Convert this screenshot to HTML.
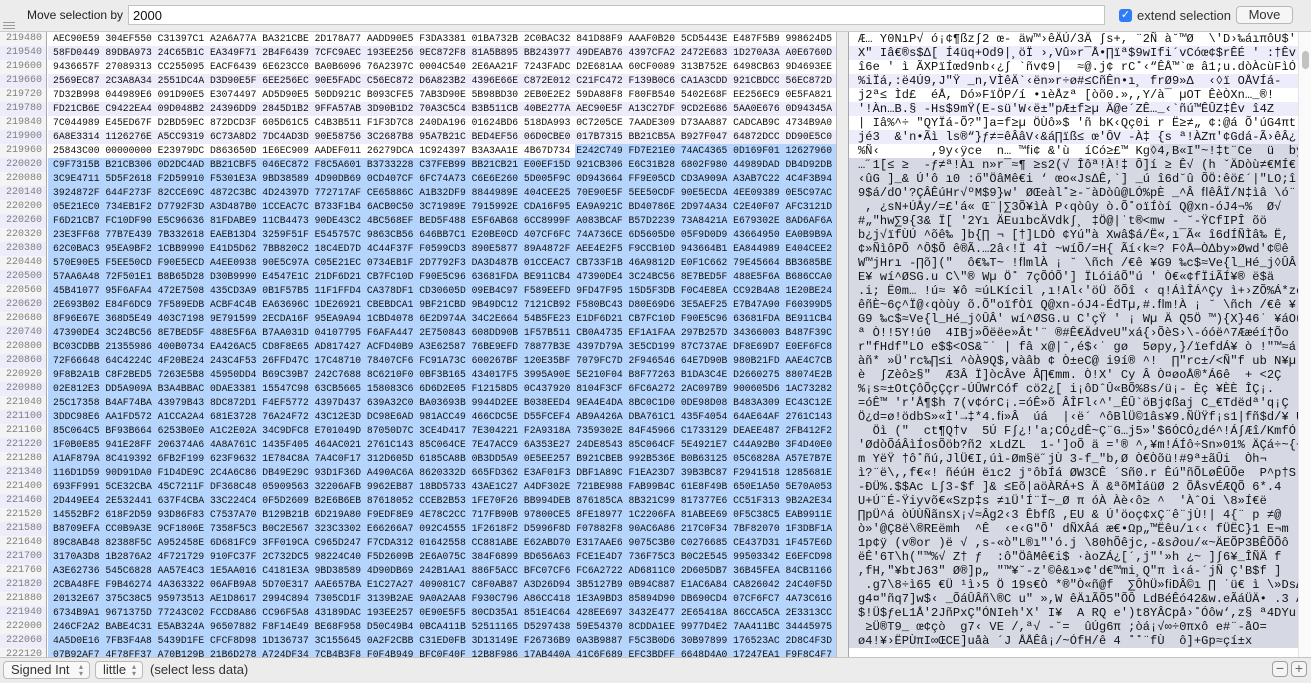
<!DOCTYPE html>
<html><head><meta charset="utf-8">
<style>
*{margin:0;padding:0;box-sizing:border-box}
html,body{width:1311px;height:683px;overflow:hidden;background:#fff;font-family:"Liberation Sans",sans-serif}
#top{position:absolute;left:0;top:0;width:1311px;height:32px;background:#ececec;border-bottom:1px solid #c9c9c9}
#top .lbl{position:absolute;left:27px;top:8px;font-size:12px;color:#222}
#top .inp{position:absolute;left:128px;top:5px;width:977px;height:20px;background:#fff;border:1px solid #c3c3c3;font-size:13px;padding:2px 4px;color:#111}
#top .cb{position:absolute;left:1119px;top:9px;width:13px;height:13px;background:#2f7df6;border-radius:3px;color:#fff;font-size:11px;line-height:13px;text-align:center}
#top .ext{position:absolute;left:1137px;top:8px;font-size:13px;color:#333}
#top .btn{position:absolute;left:1236px;top:6px;width:57px;height:18px;border:1px solid #b9b9b9;border-radius:4px;background:#f6f6f6;font-size:13px;text-align:center;line-height:16px;color:#333}
.ham{position:absolute;left:3px;width:12px;height:1px;background:#9a9a9a}
#off{position:absolute;left:0;top:32px;width:47px;height:625px;background:#f4f4f4;border-right:1px solid #a8a8a8;overflow:hidden}
#hex{position:absolute;left:48px;top:32px;width:788px;height:625px;overflow:hidden}
#div{position:absolute;left:836px;top:32px;width:13px;height:625px;background:#ececec;border-left:1px solid #bdbdbd;border-right:1px solid #a8a8a8}
#asc{position:absolute;left:849px;top:32px;width:449px;height:625px;overflow:hidden}
#sb{position:absolute;left:1298px;top:32px;width:13px;height:625px;background:#fafafa;border-left:1px solid #e4e4e4}
#sb .th{position:absolute;left:3px;top:19px;width:7px;height:18px;background:#c2c2c2;border-radius:4px}
.r{height:14px;line-height:14px;white-space:pre;position:relative;overflow:hidden}
#off .r{font-family:"Liberation Mono",monospace;font-size:10px;color:#808080;text-align:right;padding-right:4px}
#hex .r{font-family:"Liberation Mono",monospace;font-size:9.7px;color:#111;padding-left:5px}
#asc .r{font-family:"Liberation Mono","DejaVu Sans Mono",monospace;font-size:12px;letter-spacing:0.1px;color:#111;padding-left:9px}
.o{background:#ececfa}
#hex .s{background:#b5d5fd}
#asc .s{background:#d6d8e4}
.ps{position:absolute;left:527px;top:0;width:261px;height:14px;background:#b5d5fd}
.pa{position:absolute;left:301px;top:0;width:148px;height:14px;background:#d6d8e4}
.r span{position:relative}
#bot{position:absolute;left:0;top:657px;width:1311px;height:26px;background:#ececec;border-top:1px solid #c4c4c4}
.pop{position:absolute;top:3px;height:18px;border:1px solid #b9b9b9;border-radius:4px;background:#f8f8f8;font-size:13px;line-height:16px;padding-left:7px;color:#333}
.pop i{position:absolute;right:6px;font-style:normal;font-size:8px;color:#888;line-height:7px;top:1px}
.pm{position:absolute;top:3px;width:16px;height:16px;border:1px solid #9e9e9e;border-radius:4px;background:#f4f4f4;font-size:14px;line-height:13px;text-align:center;color:#666}
</style></head><body>
<div id="top">
<div class="lbl">Move selection by</div>
<div class="inp">2000</div>
<div class="cb">✓</div>
<div class="ext">extend selection</div>
<div class="btn">Move</div>
<div class="ham" style="top:22px"></div><div class="ham" style="top:25px"></div><div class="ham" style="top:28px"></div>
</div>
<div id="off">
<div class="r">219480</div><div class="r o">219540</div><div class="r">219600</div><div class="r o">219660</div><div class="r">219720</div><div class="r o">219780</div><div class="r">219840</div><div class="r o">219900</div><div class="r">219960</div><div class="r o">220020</div><div class="r">220080</div><div class="r o">220140</div><div class="r">220200</div><div class="r o">220260</div><div class="r">220320</div><div class="r o">220380</div><div class="r">220440</div><div class="r o">220500</div><div class="r">220560</div><div class="r o">220620</div><div class="r">220680</div><div class="r o">220740</div><div class="r">220800</div><div class="r o">220860</div><div class="r">220920</div><div class="r o">220980</div><div class="r">221040</div><div class="r o">221100</div><div class="r">221160</div><div class="r o">221220</div><div class="r">221280</div><div class="r o">221340</div><div class="r">221400</div><div class="r o">221460</div><div class="r">221520</div><div class="r o">221580</div><div class="r">221640</div><div class="r o">221700</div><div class="r">221760</div><div class="r o">221820</div><div class="r">221880</div><div class="r o">221940</div><div class="r">222000</div><div class="r o">222060</div><div class="r">222120</div>
</div>
<div id="hex">
<div class="r">AEC90E59 304EF550 C31397C1 A2A6A77A BA321CBE 2D178A77 AADD90E5 F3DA3381 01BA732B 2C0BAC32 841D88F9 AAAF0B20 5CD5443E E487F5B9 998624D5</div>
<div class="r o">58FD0449 89DBA973 24C65B1C EA349F71 2B4F6439 7CFC9AEC 193EE256 9EC872F8 81A5B895 BB243977 49DEAB76 4397CFA2 2472E683 1D270A3A A0E6760D</div>
<div class="r">9436657F 27089313 CC255095 EACF6439 6E623CC0 BA0B6096 76A2397C 0004C540 2E6AA21F 7243FADC D2E681AA 60CF0089 313B752E 6498CB63 9D4693EE</div>
<div class="r o">2569EC87 2C3A8A34 2551DC4A D3D90E5F 6EE256EC 90E5FADC C56EC872 D6A823B2 4396E66E C872E012 C21FC472 F139B0C6 CA1A3CDD 921CBDCC 56EC872D</div>
<div class="r">7D32B998 044989E6 091D90E5 E3074497 AD5D90E5 50DD921C B093CFE5 7AB3D90E 5B98BD30 2EB0E2E2 59DA88F8 F80FB540 5402E68F EE256EC9 0E5FA821</div>
<div class="r o">FD21CB6E C9422EA4 09D048B2 24396DD9 2845D1B2 9FFA57AB 3D90B1D2 70A3C5C4 B3B511CB 40BE277A AEC90E5F A13C27DF 9CD2E686 5AA0E676 0D94345A</div>
<div class="r">7C044989 E45ED67F D2BD59EC 872DCD3F 605D61C5 C4B3B511 F1F3D7C8 240DA196 01624BD6 518DA993 0C7205CE 7AADE309 D73AA887 CADCAB9C 4734B9A0</div>
<div class="r o">6A8E3314 1126276E A5CC9319 6C73A8D2 7DC4AD3D 90E58756 3C2687B8 95A7B21C BED4EF56 06D0CBE0 017B7315 BB21CB5A B927F047 64872DCC DD90E5C0</div>
<div class="r"><div class="ps"></div><span>25843C00 00000000 E23979DC D863650D 1E6EC909 AADEF011 26279DCA 1C924397 B3A3AA1E 4B67D734 E242C749 FD7E21E0 74AC4365 0D169F01 12627960</span></div>
<div class="r s">C9F7315B B21CB306 0D2DC4AD BB21CBF5 046EC872 F8C5A601 B3733228 C37FEB99 BB21CB21 E00EF15D 921CB306 E6C31B28 6802F980 44989DAD DB4D92DB</div>
<div class="r s">3C9E4711 5D5F2618 F2D59910 F5301E3A 9BD38589 4D90DB69 0CD407CF 6FC74A73 C6E6E260 5D005F9C 0D943664 FF9E05CD CD3A909A A3AB7C22 4C4F3B94</div>
<div class="r s">3924872F 644F273F 82CCE69C 4872C3BC 4D24397D 772717AF CE65886C A1B32DF9 8844989E 404CEE25 70E90E5F 5EE50CDF 90E5ECDA 4EE09389 0E5C97AC</div>
<div class="r s">05E21EC0 734EB1F2 D7792F3D A3D487B0 1CCEAC7C B733F1B4 6ACB0C50 3C71989E 7915992E CDA16F95 EA9A921C BD40786E 2D974A34 C2E40F07 AFC3121D</div>
<div class="r s">F6D21CB7 FC10DF90 E5C96636 81FDABE9 11CB4473 90DE43C2 4BC568EF BED5F488 E5F6AB68 6CC8999F A083BCAF B57D2239 73A8421A E679302E 8AD6AF6A</div>
<div class="r s">23E3FF68 77B7E439 7B332618 EAEB13D4 3259F51F E545757C 9863CB56 646BB7C1 E20BE0CD 407CF6FC 74A736CE 6D5605D0 05F9D0D9 43664950 EA0B9B9A</div>
<div class="r s">62C0BAC3 95EA9BF2 1CBB9990 E41D5D62 7BB820C2 18C4ED7D 4C44F37F F0599CD3 890E5877 89A4872F AEE4E2F5 F9CCB10D 943664B1 EA844989 E404CEE2</div>
<div class="r s">570E90E5 F5EE50CD F90E5ECD A4EE0938 90E5C97A C05E21EC 0734EB1F 2D7792F3 DA3D487B 01CCEAC7 CB733F1B 46A9812D E0F1C662 79E45664 BB3685BE</div>
<div class="r s">57AA6A48 72F501E1 B8B65D28 D30B9990 E4547E1C 21DF6D21 CB7FC10D F90E5C96 63681FDA BE911CB4 47390DE4 3C24BC56 8E7BED5F 488E5F6A B686CCA0</div>
<div class="r s">45B41077 95F6AFA4 472E7508 435CD3A9 0B1F57B5 11F1FFD4 CA378DF1 CD30605D 09EB4C97 F589EEFD 9FD47F95 15D5F3DB F0C4E8EA CC92B4A8 1E20BE24</div>
<div class="r s">2E693B02 E84F6DC9 7F589EDB ACBF4C4B EA63696C 1DE26921 CBEBDCA1 9BF21CBD 9B49DC12 7121CB92 F580BC43 D80E69D6 3E5AEF25 E7B47A90 F60399D5</div>
<div class="r s">8F96E67E 368D5E49 403C7198 9E791599 2ECDA16F 95EA9A94 1CBD4078 6E2D974A 34C2E664 54B5FE23 E1DF6D21 CB7FC10D F90E5C96 63681FDA BE911CB4</div>
<div class="r s">47390DE4 3C24BC56 8E7BED5F 488E5F6A B7AA031D 04107795 F6AFA447 2E750843 608DD90B 1F57B511 CB0A4735 EF1A1FAA 297B257D 34366003 B487F39C</div>
<div class="r s">BC03CDBB 21355986 400B0734 EA426AC5 CD8F8E65 AD817427 ACFD40B9 A3E62587 76BE9EFD 78877B3E 4397D79A 3E5CD199 87C737AE DF8E69D7 E0EF6FC8</div>
<div class="r s">72F66648 64C4224C 4F20BE24 243C4F53 26FFD47C 17C48710 78407CF6 FC91A73C 600267BF 120E35BF 7079FC7D 2F946546 64E7D90B 980B21FD AAE4C7CB</div>
<div class="r s">9F8B2A1B C8F2BED5 7263E5B8 45950DD4 B69C39B7 242C7688 8C6210F0 0BF3B165 434017F5 3995A90E 5E210F04 B8F77263 B1DA3C4E D2660275 88074E2B</div>
<div class="r s">02E812E3 DD5A909A B3A4BBAC 0DAE3381 15547C98 63CB5665 158083C6 6D6D2E05 F12158D5 0C437920 8104F3CF 6FC6A272 2AC097B9 900605D6 1AC73282</div>
<div class="r s">25C17358 B4AF74BA 43979B43 8DC872D1 F4EF5772 4397D437 639A32C0 BA03693B 9944D2EE B038EED4 9EA4E4DA 8BC0C1D0 0DE98D08 B483A309 EC43C12E</div>
<div class="r s">3DDC98E6 AA1FD572 A1CCA2A4 681E3728 76A24F72 43C12E3D DC98E6AD 981ACC49 466CDC5E D55FCEF4 AB9A426A DBA761C1 435F4054 64AE64AF 2761C143</div>
<div class="r s">85C064C5 BF93B664 6253B0E0 A1C2E02A 34C9DFC8 E701049D 87050D7C 3CE4D417 7E304221 F2A9318A 7359302E 84F45966 C1733129 DEAEE487 2FB412F2</div>
<div class="r s">1F0B0E85 941E28FF 206374A6 4A8A761C 1435F405 464AC021 2761C143 85C064CE 7E47ACC9 6A353E27 24DE8543 85C064CF 5E4921E7 C44A92B0 3F4D40E0</div>
<div class="r s">A1AF879A 8C419392 6FB2F199 623F9632 1E784C8A 7A4C0F17 312D605D 6185CA8B 0B3DD5A9 0E5EE257 B921CBEB 992B536E B0B63125 05C6828A A57E7B7E</div>
<div class="r s">116D1D59 90D91DA0 F1D4DE9C 2C4A6C86 DB49E29C 93D1F36D A490AC6A 8620332D 665FD362 E3AF01F3 DBF1A89C F1EA23D7 39B3BC87 F2941518 1285681E</div>
<div class="r s">693FF991 5CE32CBA 45C7211F DF368C48 05909563 32206AFB 9962EB87 18BD5733 43AE1C27 A4DF302E 721BE988 FAB99B4C 61E8F49B 650E1A50 5E70A053</div>
<div class="r s">2D449EE4 2E532441 637F4CBA 33C224C4 0F5D2609 B2E6B6EB 87618052 CCEB2B53 1FE70F26 BB994DEB 876185CA 8B321C99 817377E6 CC51F313 9B2A2E34</div>
<div class="r s">14552BF2 618F2D59 93D86F83 C7537A70 B129B21B 6D219A80 F9EDF8E9 4E78C2CC 717FB90B 97800CE5 8FE18977 1C2206FA 81ABEE69 0F5C38C5 EAB9911E</div>
<div class="r s">B8709EFA CC0B9A3E 9CF1806E 7358F5C3 B0C2E567 323C3302 E66266A7 092C4555 1F2618F2 D5996F8D F07882F8 90AC6A86 217C0F34 7BF82070 1F3DBF1A</div>
<div class="r s">89C8AB48 82388F5C A952458E 6D681FC9 3FF019CA C965D247 F7CDA312 01642558 CC881ABE E62ABD70 E317AAE6 9075C3B0 C0276685 CE437D31 1F457E6D</div>
<div class="r s">3170A3D8 1B2876A2 4F721729 910FC37F 2C732DC5 98224C40 F5D2609B 2E6A075C 384F6899 BD656A63 FCE1E4D7 736F75C3 B0C2E545 99503342 E6EFCD98</div>
<div class="r s">A3E62736 545C6828 AA57E4C3 1E5AA016 C4181E3A 9BD38589 4D90DB69 242B1AA1 886F5ACC BFC07CF6 FC6A2722 AD6811C0 2D605DB7 36B45FEA 84CB1166</div>
<div class="r s">2CBA48FE F9B46274 4A363322 06AFB9A8 5D70E317 AAE657BA E1C27A27 409081C7 C8F0AB87 A3D26D94 3B5127B9 0B94C887 E1AC6A84 CA826042 24C40F5D</div>
<div class="r s">20132E67 375C38C5 95973513 AE1D8617 2994C894 7305CD1F 3139B2AE 9A0A2AA8 F930C796 A86CC418 1E3A9BD3 85894D90 DB690CD4 07CF6FC7 4A73C616</div>
<div class="r s">6734B9A1 9671375D 77243C02 FCCD8A86 CC96F5A8 43189DAC 193EE257 0E90E5F5 80CD35A1 851E4C64 428EE697 3432E477 2E65418A 86CCA5CA 2E3313CC</div>
<div class="r s">246CF2A2 BABE4C31 E5AB324A 96507882 F8F14E49 BE68F958 D50C49B4 0BCA411B 52511165 D5297438 59E54370 8CDDA1EE 9977D4E2 7AA411BC 34445975</div>
<div class="r s">4A5D0E16 7FB3F4A8 5439D1FE CFCF8D98 1D136737 3C155645 0A2F2CBB C31ED0FB 3D13149E F26736B9 0A3B9887 F5C3B0D6 30B97899 176523AC 2D8C4F3D</div>
<div class="r s">07B92AF7 4F78FF37 A70B129B 21B6D278 A724DF34 7CB4B3F8 F0F4B949 BFC0F40F 12B8F986 17AB440A 41C6F689 EFC3BDFF 6648D4A0 17247EA1 F9F8C4F7</div>
</div>
<div id="div"></div>
<div id="asc">
<div class="r">Æ… Y0NıP√ ó¡¢¶ßz∫2 œ- äw™›êÄÚ/3Ä ∫s+, ¨2Ñ à˘™Ø  \'D›‰áıπôU$'</div>
<div class="r o">X" Iâ€®s$∆[ Í4üq+Od9|¸öÏ ›,Vû»r¯Å•∏ïª$9wIfi´vCóœ¢$rÊÉ ' :†Êv</div>
<div class="r">î6e ' ì ÃXPïÍœd9nb‹¿∫ `ñv¢9|  ≈@.j¢ rC˚‹“ÊÅ™`œ â1;u.dòÀcùFìÓ</div>
<div class="r o">%iÏá,:ë4Ú9,J"Ÿ _n,VÌêÄ`‹ën»r÷ø#≤CñÊn•ı¸ frØ9»Δ  ‹◊ï OÅVÍá-</div>
<div class="r">j2ª≤ Ìd£  éÅ, Dó»FïÖP/í •ıèÅzª [òõ0.»,,Y/à¯ µOT ÊèÒXn…_®!</div>
<div class="r o">'!Àn…B.§ -Hs$9mŸ(E-sü'W‹ë±"pÆ±f≥µ Ä@e´ZÊ…_‹`ñú™ÊÛZ‡Êv î4Z</div>
<div class="r">| Iâ%^÷ "QYÏá-Õ?"]a=f≥µ ÖÙô»$ 'ñ bK‹Qç0i r Ë≥≠„ ¢:@á Õ'úG4πt</div>
<div class="r o">jé3  &amp;'n•Ãì ls®“}ƒ≠=êÂâV‹&amp;á∏ïß≤ œ'ÔV -À‡ {s ª!ÀZπ'¢Gdá-Ã›êÂ¿</div>
<div class="r"><div class="pa"></div><span>%Ñ‹       ,9y‹ÿce  n… ™ﬁ¢ &amp;'ù  íCó≥£™ Kg◊4,B«I"~!‡t¨Ce  ü  by`</span></div>
<div class="r s">…˝1[≤ ≥  -ƒ≠ª!Àı n»r¯≈¶ ≥s2(√ Îôª!À!‡ Ô]í ≥ Ê√ (h ˇÄDòù≠€MÍ€</div>
<div class="r s">‹ûG ]_&amp; Ú'ô ı0 :ő"ÖâMê€i ‘ œo«Js∆Ê,`] _ú î6d˘û ÕÖ:êö£´|"LO;î</div>
<div class="r s">9$á/dO'?ÇÂÊúHr√ºM$9}w' ØŒeàl˚≥-˘àDòû@LÓ%pÈ _^Â ﬂêÂÏ/N‡ìâ \ó¨</div>
<div class="r s"> , ¿sN+ÚÅy/=£'á« Œ¨|∑3Õ¥ìÀ P‹qòûy ò.Õ˚oïÍòí Q@xn-óJ4¬%  Ø√</div>
<div class="r s">#„"hw∑9{3&amp; Ï[ '2Yı ÄEuıbcÄVdk∫¸ ‡Ö@|˙t®&lt;mw - ˘-ŸCfIPÎ õö</div>
<div class="r s">b¿j√ïfÙÚ ^õê‰ ]b{∏ ¬ [†]LDÒ ¢Yú"à Xwâ$á/Ë«,ı¯Ã« î6dÍÑÌâ‰ Ë,</div>
<div class="r s">¢»ÑìôPÕ ^Ô$Õ ê®Ã.…2â‹!Ï 4Ì ~wíÕ/=H{ Ãí‹k≈? F◊Å—Ò∆by»Øwd'¢©ê</div>
<div class="r s">W™jHrı -∏õ]("  ô€‰T~ !ﬂmlÀ ¡ ˘ \ñch /€ê ¥G9 ‰c$≈Ve{l_Hé_j◊ÛÂ'</div>
<div class="r s">E¥ wí^ØSG.u C\"® Wµ Ö˚ 7çÕÓÕ'] ÏLóiáÕ"ú ' Ò€«¢fÏiÃÍ¥® ë$ä</div>
<div class="r s">.i; Ë0m… !ú≈ ¥ô ≈úLKícil ,ı!Al‹'öÜ õÕî ‹ q!ÁìÎÁ^Çy ì+›ZÕ%Á*zè" ô¨</div>
<div class="r s">êñÈ~6ç^Ï@‹qòùy õ.Õ"oïfÒï Q@xn-óJ4-ÉdTµ,#.ﬂm!À ¡ ˘ \ñch /€ê ¥</div>
<div class="r s">G9 ‰c$≈Ve{l_Hé_j◊ÛÂ' wí^ØSG.u C'çŸ ' ¡ Wµ Ä Q5Ö ™){X}46˙ ¥áOü</div>
<div class="r s">ª Ò!!5Y!ú0  4IBj»Õëëe»Ât'¨ ®#Ê€ÄdveU"xá{›ÕèS›\-óóë^7Ææéí†Õo</div>
<div class="r s">r"fHdf"LO e$$&lt;OS&amp;˜˙ | fâ x@|ˆ,é$‹˙ gø  5øpy,}/ïefdÁ¥ ò !"™≈á</div>
<div class="r s">àñ* »Ü'rc‰∏≤i ^òÀ9Q$,vàâb ¢ Ò±eC@ i9í® ^!  ∏"rc±/&lt;Ñ"f ub N¥µ</div>
<div class="r s">è  ∫Zèô≥§"  Æ3Â Ï]òcÂve Â∏€mm. Ò!X' Cy Â Ò¤øoÅ®*Á6ê  + &lt;2Ç</div>
<div class="r s">%¡s≈±OtÇôÕçÇçr-ÚÛWrCóf cö2¿[ i¡ôDˆÛ«BÕ%8s/ü¡- Èç ¥ÈÈ ÎÇ¡.</div>
<div class="r s">=óÊ™ 'r'Å¶$h 7(v¢órC¡.=óÊ»õ ÂÎFl‹^'_ÊÛ`öBj¢ßaj C_€Tdëdª'q¡Ç</div>
<div class="r s">Ö¿d=ø!ödbS»«Ì'→‡*4.ﬁ»Â  úá  |‹ë´ ^ôBlÜ©1âs¥9.ÑÜŸf¡s1|fñ$d/¥ Ü</div>
<div class="r s">  Öì ("  ct¶Q†v  5Ú F∫¿!'a;CÓ¿dÊ~Ç¨G…j5»'$6ÓCÓ¿dé^!Á∫Æî/KmfÓ</div>
<div class="r s">'ØdòÕáÂìÍosÕöb?ñ2 xLdZL  1-']oÕ ä ='® ^,¥m!ÁÍô÷Sn»01% ÄÇá÷~{÷</div>
<div class="r s">m YëŸ †ô˚ñú,JlÜ€I,úì-Øm§ë˝jÙ 3-f_"b,Ø Ò€Òõü!#9ª±ãÛi  Òh¬</div>
<div class="r s">ì?¨ë\,,f€«! ñéúH ëıc2 j°ôbÍá ØW3CÊ ´Sñ0.r Êú"ñÕLøÊÛÕe  P^p†S</div>
<div class="r s">-ÐÜ%.$$Ac L∫3-$f ]&amp; ≤Eõ|aöÀRÁ+S Ä &amp;ªõMÌáüØ 2 ÕÅsvÉÆQÕ 6*.4</div>
<div class="r s">U+Ú¨É-Ÿiyvõ€«Szp‡s ≠ıÜ'Í¨Ï~_Ø π óÀ Àè‹ô≥ ^  'ÀˆOi \8»Í€ë</div>
<div class="r s">∏pÜ^á òÚÙÑãnsX¡√≈Âg2‹3 Êbfß ,EU &amp; Ú'öoç¢xÇ¨ê¨jÙ!| 4{¨ p ≠@</div>
<div class="r s">ò»'@Ç8ë\®REëmh  ^Ê  ‹e‹G"Õ' dÑXÂá æ€•Ωp„™Ëêu/ı‹‹ fÜËC}1 E¬m</div>
<div class="r s">1p¢ÿ (v®or )ë √ ,s-«ò"L®ı"'ó.j \80hÕêjc,-&amp;s∂ou/«~ÄEÕP3BÊÕÕô</div>
<div class="r s">ëÊ'6T\h("™%√ Z† ƒ  :ô"ÖâMê€i$ ·àoZÁ¿[´,j"'»h ¿~ ]∫6¥_ÎÑÄ f</div>
<div class="r s">,fH,"¥btJ63" Ø®]p„ "™¥˘-z'©ê&amp;ı»¢'d€™mi¸Q"π ì‹á-´jÑ Ç'B$f ]</div>
<div class="r s"> .g7\8÷ì65 €Ü ¹ì›5 Ö 19s€Ò *®"Ò«ñ@f  ∑ÔhÜ»ﬁDÂ©ı ∏ ˙ü€ ì \»Ds∆</div>
<div class="r s">g4¤"ñq7]w$‹ _ÕáÛÂñ\®C u" »,W êÄıÃÕ5"ÕÔ LdBéÊó42&amp;w.eÃáÜÄ• .3 Â</div>
<div class="r s">$!Ü$ƒeL1Å'2JñPxÇ"ÓNIeh'X' I¥  A RQ e')t8YÂCpå›˚Óôw‘,z§ ª4DYu</div>
<div class="r s"> ≥Ü®T9_ œ¢çò  g7‹ VE /,ª√ -˘=  ûÚg6π ;òá¡√∞÷0πxô e#¨-åO=</div>
<div class="r s">ø4!¥›ËPÙπI∞ŒCE]uåà ´J ÅÅÊâ¡/~ÓfH/ê 4 ˚˚¨fÙ  ô]+Gp≈çí±x</div>
</div>
<div id="sb"><div class="th"></div></div>
<div id="bot">
<div class="pop" style="left:3px;width:87px">Signed Int<i>▴<br>▾</i></div>
<div class="pop" style="left:95px;width:48px">little<i>▴<br>▾</i></div>
<div style="position:absolute;left:150px;top:4px;font-size:13px;color:#333">(select less data)</div>
<div class="pm" style="left:1272px">−</div>
<div class="pm" style="left:1291px">+</div>
</div>
</body></html>
